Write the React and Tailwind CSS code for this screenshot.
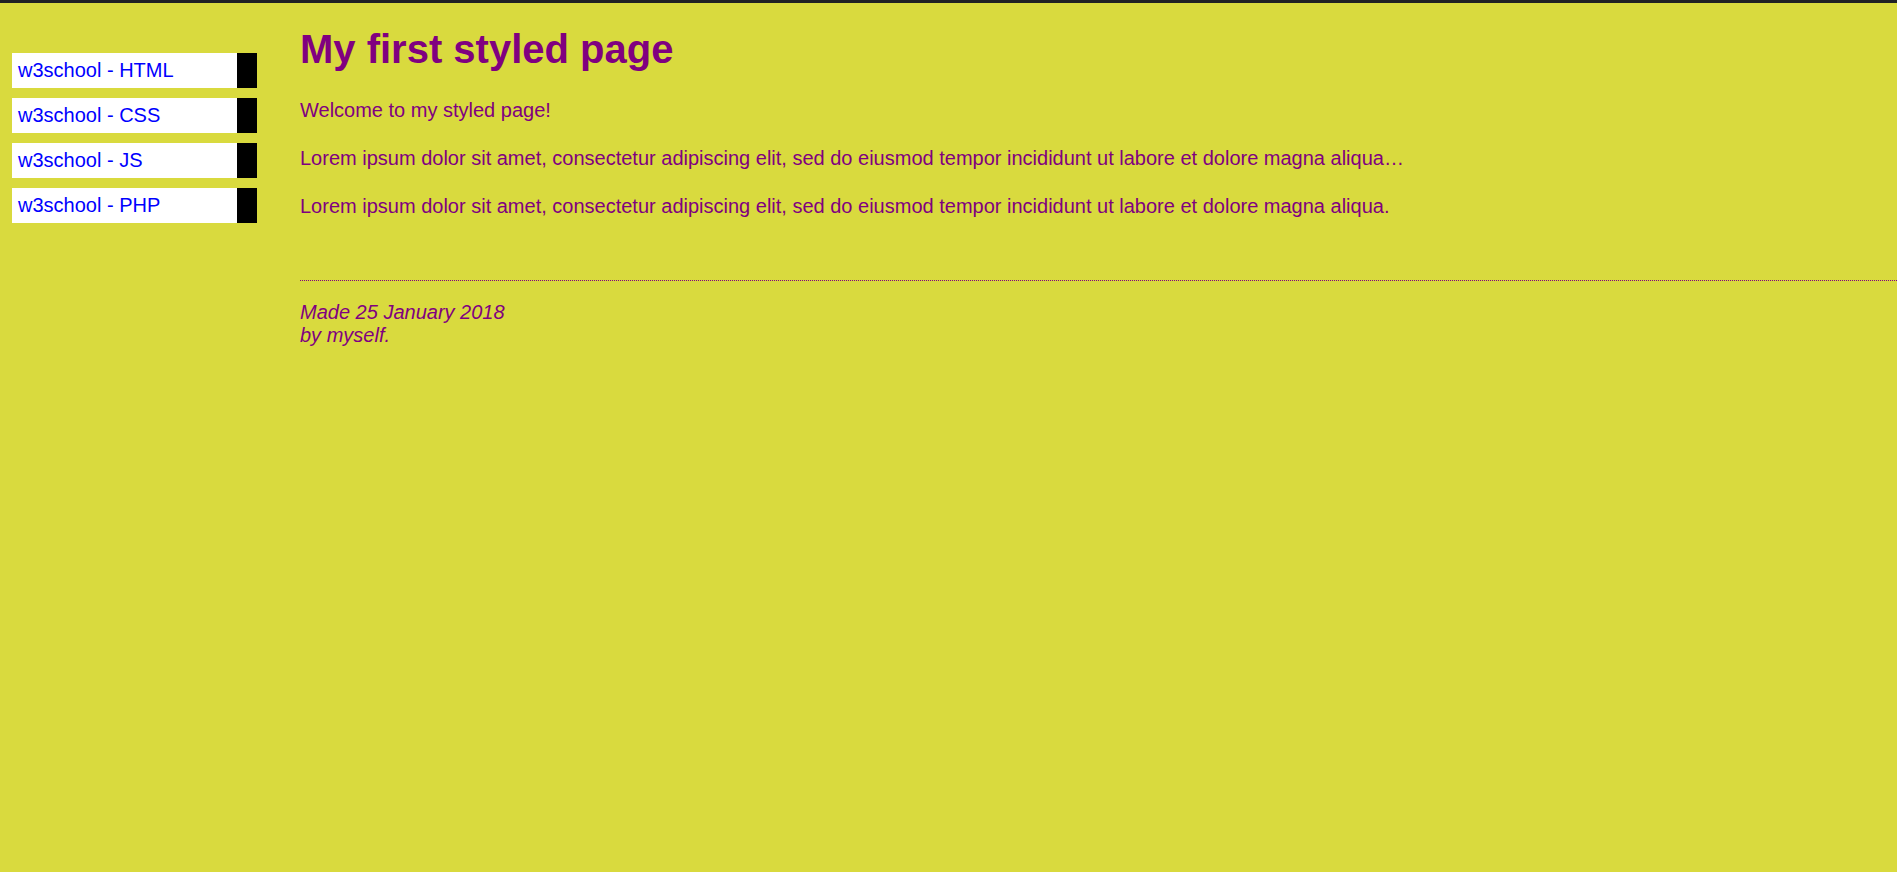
const links = ["HTML", "CSS", "JS", "PHP"];

export default function App() {
  return (
    <div className="min-h-[872px] bg-[#d9da3e] font-['Liberation_Sans',Arial,sans-serif] text-[20px] leading-[28.8px] text-[#800080]">
      <div className="h-[3px] bg-[#202124]" />
      <div className="flex">
        <ul className="ml-3 mt-[50px] flex w-[288px] shrink-0 flex-col gap-[10px]">
          {links.map((name) => (
            <li key={name}>
              <a
                href="#"
                className="block h-[35px] w-[245px] border-r-[20px] border-black bg-white py-[3px] pl-[6px] text-[#0000ff]"
              >
                w3school - {name}
              </a>
            </li>
          ))}
        </ul>

        <main className="flex-1">
          <h1 className="mt-[24px] text-[40px] font-bold leading-[44px]">
            My first styled page
          </h1>
          <p className="mt-[25px]">Welcome to my styled page!</p>
          <p className="mt-[19.2px]">
            Lorem ipsum dolor sit amet, consectetur adipiscing elit, sed do
            eiusmod tempor incididunt ut labore et dolore magna aliqua…
          </p>
          <p className="mt-[19.2px]">
            Lorem ipsum dolor sit amet, consectetur adipiscing elit, sed do
            eiusmod tempor incididunt ut labore et dolore magna aliqua.
          </p>

          <div className="mt-[59px] border-t border-dotted border-[#800080]" />
          <address className="mt-[20px] leading-[23px] italic">
            Made 25 January 2018
            <br />
            by myself.
          </address>
        </main>
      </div>
    </div>
  );
}
